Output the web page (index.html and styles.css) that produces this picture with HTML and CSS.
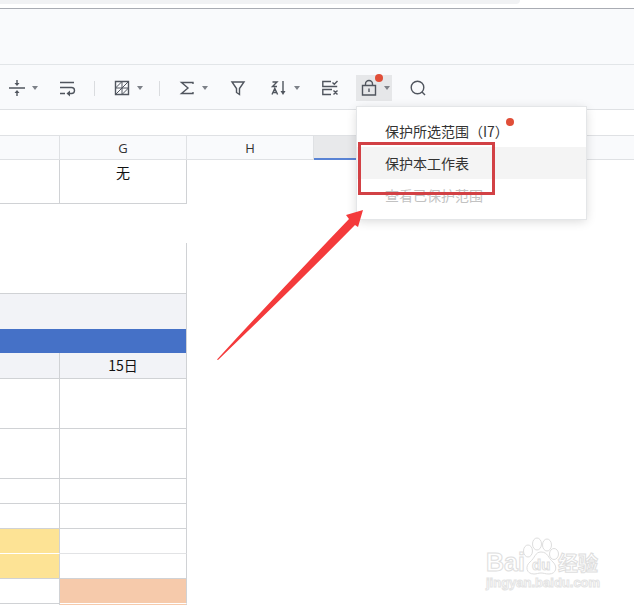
FILE: index.html
```html
<!DOCTYPE html>
<html lang="zh-CN">
<head>
<meta charset="utf-8">
<title>工作表</title>
<link rel="stylesheet" href="styles.css">
</head>
<body>
<div class="app">
  <div class="browser-bar"><div class="address"></div></div>
  <header class="title-bar"></header>
  <div class="toolbar">
    <div class="group">
      <button class="tool" aria-label="垂直对齐">
        <svg class="icon" viewBox="0 0 16 16"><path d="M0 8h16M8 0v4M8 12v4"/><path class="solid" d="M5.500 3h5L8 6zM5.500 13h5L8 10z"/></svg>
        <span class="caret"></span>
      </button>
      <button class="tool" aria-label="自动换行">
        <svg class="icon" viewBox="0 0 16 16"><path d="M1 2.500h14M1 7.500h11.500a3 3 0 0 1 0 6H10M1 13.500h5"/><path class="solid" d="M11 10.500v6L7.500 13.500z"/></svg>
      </button>
    </div>
    <span class="divider"></span>
    <div class="group">
      <button class="tool" aria-label="合并单元格">
        <svg class="icon" viewBox="0 0 16 16"><path d="M1.500 1.500h13v13h-13z"/><path class="thin" d="M1.500 8h13M8 1.500v13M1.500 8L8 1.500M1.500 14.500l13-13M8 14.500L14.500 8"/></svg>
        <span class="caret"></span>
      </button>
    </div>
    <span class="divider"></span>
    <div class="group group-data">
      <button class="tool" aria-label="求和">
        <svg class="icon" viewBox="0 0 16 16"><path d="M14 4V2.500H2.500L9 8l-6.500 5.500H14V12"/></svg>
        <span class="caret"></span>
      </button>
      <button class="tool" aria-label="筛选">
        <svg class="icon" viewBox="0 0 16 16"><path d="M2 2h12L9.500 8.500v6l-3-2v-4z"/></svg>
      </button>
      <button class="tool" aria-label="排序">
        <svg class="icon" viewBox="0 0 16 16"><path d="M1.500 2h4.500L1.500 6.500H6M1 14.500l2.800-6 2.800 6M2 12.500h3.500M12 1v12"/><path class="solid" d="M9.500 11h5L12 15z"/></svg>
        <span class="caret"></span>
      </button>
      <button class="tool" aria-label="数据验证">
        <svg class="icon" viewBox="0 0 16 16"><path d="M9 1.500H.800v5h14.400M9 14.500H.800v-5h9.200M10.500 2.500l1.800 1.800L15.500 1M11.500 10.500l4 4M15.500 10.500l-4 4"/></svg>
      </button>
    </div>
    <div class="group group-protect">
      <div class="protect">
        <button class="tool active" aria-label="保护范围" aria-expanded="true">
          <svg class="icon" viewBox="0 0 16 16"><path d="M1.500 5.500h13v9.500h-13zM4.500 5.500V4a3.500 3.500 0 0 1 7 0v1.500M8 8.500v3.500"/></svg>
          <span class="caret"></span>
        </button>
        <span class="dot tool-dot"></span>
        <div class="menu">
          <button class="menu-item">保护所选范围（I7）<span class="dot item-dot"></span></button>
          <button class="menu-item selected">保护本工作表</button>
          <button class="menu-item" disabled>查看已保护范围</button>
          <div class="highlight"></div>
        </div>
      </div>
      <button class="tool" aria-label="查找">
        <svg class="icon" viewBox="0 0 16 16"><circle cx="7.500" cy="7.500" r="6.300"/><path d="M12 12l3 3"/></svg>
      </button>
    </div>
  </div>
  <div class="formula-bar"></div>
  <main class="sheet">
    <table>
      <colgroup><col class="col-f"><col class="col"><col class="col"><col class="col"><col></colgroup>
      <thead>
        <tr><th></th><th>G</th><th>H</th><th class="current"></th><th></th></tr>
      </thead>
      <tbody>
        <tr class="row-note"><td></td><td>无</td></tr>
        <tr class="row-gap"></tr>
        <tr class="row-title"><td colspan="2"></td></tr>
        <tr class="row-sub"><td colspan="2"></td></tr>
        <tr class="row-band"><td colspan="2"></td></tr>
        <tr class="row-date"><td></td><td>15日</td></tr>
        <tr class="row-tall"><td></td><td></td></tr>
        <tr class="row-tall"><td></td><td></td></tr>
        <tr><td></td><td></td></tr>
        <tr><td></td><td></td></tr>
        <tr><td class="yellow split"></td><td class="light"></td></tr>
        <tr><td class="yellow"></td><td></td></tr>
        <tr><td></td><td class="peach split"></td></tr>
        <tr><td></td><td class="peach"></td></tr>
      </tbody>
    </table>
  </main>
  <svg class="arrow" viewBox="0 0 146 150" aria-hidden="true"><path d="M0 149.500Q62 82 132 9l-3-4 17-5-5 17-3-2Q74 80 1 150z"/></svg>
  <svg class="watermark" viewBox="0 0 116 56" role="img" aria-label="Baidu经验">
    <text class="brand" x="1" y="34">Bai</text>
    <g class="paw">
      <ellipse cx="43" cy="14" rx="4.500" ry="6"/>
      <ellipse cx="52" cy="7" rx="4.500" ry="6"/>
      <ellipse cx="62" cy="8" rx="4.500" ry="6"/>
      <ellipse cx="69" cy="17" rx="4.500" ry="5.500"/>
      <path d="M56 15c7 0 7 6 12 10 5 5 3 12-4 12-4 0-5-1-8-1s-4 1-7 1c-8 0-9-8-4-12s5-10 11-10z"/>
    </g>
    <text class="du" x="47" y="33">du</text>
    <text class="cn" x="73" y="34">经验</text>
    <text class="domain" x="1" y="50">jingyan.baidu.com</text>
  </svg>
</div>
</body>
</html>
```
FILE: styles.css
```css
* { box-sizing: border-box; }

body {
  margin: 0;
  background: #fff;
  color: #333;
  font-family: "Noto Sans CJK SC", sans-serif;
  font-size: 14px;
}

button {
  border: 0;
  margin: 0;
  background: none;
  color: inherit;
  font: inherit;
}

.app {
  position: relative;
  height: 100vh;
  overflow: hidden;
}

.browser-bar {
  height: 9px;
  border-bottom: 1px solid #a9acb3;
}

.address {
  width: 82%;
  height: 4px;
  background: #f1f2f4;
  border-bottom-right-radius: 8px;
}

.title-bar {
  height: 56px;
  background: #f9fafc;
  border-bottom: 1px solid #e2e5e8;
}

.toolbar {
  display: flex;
  align-items: center;
  height: 45px;
  padding: 2px 4px 0;
  background: #f9fafc;
  border-bottom: 1px solid #dfe1e4;
}

.group { display: flex; gap: 14px; }
.group-data { gap: 15px; }
.group-protect { gap: 13px; margin-left: 13px; }

.divider {
  width: 1px;
  height: 15px;
  margin: 0 14px;
  background: #dadcdf;
}

.tool {
  display: flex;
  align-items: center;
  gap: 7px;
  height: 26px;
  padding: 0 5px;
}

.tool:has(.caret) { padding-right: 2px; }
.tool.active { background: #e6e7e9; }

.icon {
  width: 16px;
  height: 16px;
  overflow: visible;
  fill: none;
  stroke: #50555e;
  stroke-width: 1.4;
}

.icon .solid { fill: #50555e; stroke: none; }
.icon .thin { stroke-width: 1; }

.caret {
  border: 3px solid transparent;
  border-top: 4px solid #7d8188;
  border-bottom: 0;
}

.protect { position: relative; }

.dot {
  width: 8px;
  height: 8px;
  border-radius: 50%;
  background: #e04e38;
}

.tool-dot { position: absolute; top: -1px; right: 9px; }

.menu {
  position: absolute;
  z-index: 2;
  top: 32px;
  left: 1px;
  width: 229px;
  padding: 8px 0;
  background: #fff;
  box-shadow: 0 0 0 1px #e4e6e8, 0 2px 10px rgba(0, 0, 0, 0.16);
}

.menu-item {
  position: relative;
  display: block;
  width: 100%;
  height: 32px;
  padding: 0 28px;
  line-height: 32px;
  text-align: left;
}

.menu-item.selected { background: #f4f4f4; }
.menu-item:disabled { color: #c2c2c2; }
.item-dot { position: absolute; top: 3px; left: 149px; }

.highlight {
  position: absolute;
  top: 35px;
  left: 1px;
  width: 137px;
  height: 53px;
  border: 3px solid #d24145;
}

.formula-bar {
  height: 26px;
  border-bottom: 1px solid #dfe1e4;
}

table {
  width: 100%;
  table-layout: fixed;
  border-collapse: separate;
  border-spacing: 0;
}

.col-f { width: 60px; }
.col { width: 127px; }

th, td {
  height: 25px;
  padding: 0;
  border-right: 1px solid #d0d2d5;
  border-bottom: 1px solid #d0d2d5;
  line-height: 20px;
  text-align: center;
}

th {
  height: 24px;
  background: #f9fafc;
  border-color: #dfe1e4;
  font-family: "Open Sans", sans-serif;
  font-size: 13px;
  font-weight: 400;
}

th:last-child { border-right: 0; }
th.current { background: #e8e9eb; border-bottom: 2px solid #5983d4; }

td { color: #111; }
.row-note td { height: 44px; padding-top: 2px; vertical-align: top; }
.row-gap { height: 39px; }
.row-title td { height: 51px; }
.row-sub td { height: 35px; background: #f2f3f7; border-bottom: 0; }
.row-band td { height: 24px; background: #4571c7; border-bottom: 0; }
.row-date td { height: 26px; padding-bottom: 2px; background: #f2f3f7; }
.row-tall td { height: 50px; }
td.light { border-bottom-color: #e2e3e5; }
td.yellow { background: #fde395; }
td.peach { background: #f6caab; }
td.split { border-bottom-color: #fff; }

.arrow {
  position: absolute;
  z-index: 3;
  top: 210px;
  left: 217px;
  width: 146px;
  height: 150px;
  fill: #f43a3b;
}

.watermark {
  position: absolute;
  right: 33px;
  bottom: 12px;
  width: 116px;
  height: 56px;
  overflow: visible;
  fill: #fff;
  stroke: #dedede;
  stroke-width: 1;
  font-family: "Liberation Sans", sans-serif;
  font-weight: 700;
}

.brand { font-size: 25px; }
.du { font-size: 15px; }
.cn { font-family: "Noto Sans CJK SC", sans-serif; font-size: 20px; }
.domain { font-size: 13px; stroke: #e4e4e4; }
```
